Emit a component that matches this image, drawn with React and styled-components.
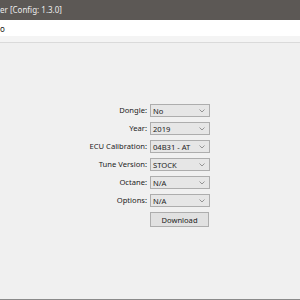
import React from "react";
import styled, { createGlobalStyle } from "styled-components";

const Global = createGlobalStyle`
  html, body { margin: 0; padding: 0; background: #f0f0f0; }
  #root { width: 300px; height: 300px; overflow: hidden; }
`;

const Window = styled.div`
  width: 300px;
  height: 300px;
  display: flex;
  flex-direction: column;
  background: #f0f0f0;
  font-family: "Noto Sans", "Open Sans", sans-serif;
  color: #1a1a1a;
  box-sizing: border-box;
  border-bottom: 1px solid #8a8a8a;
`;

const TitleBar = styled.div`
  height: 20px;
  flex: none;
  background: #5c5855;
  color: #ececec;
  font-size: 8px;
  line-height: 20px;
  white-space: nowrap;
`;

const MenuBar = styled.div`
  height: 15px;
  flex: none;
  background: #ffffff;
  font-size: 8px;
  line-height: 15px;
  padding-top: 1px;
`;

const Strip = styled.div`
  height: 6px;
  flex: none;
  background: #f4f4f4;
  border-bottom: 1px solid #dadada;
`;

const Body = styled.div`
  flex: 1;
  padding-top: 61px;
  padding-left: 57px;
`;

const Form = styled.div`
  display: grid;
  grid-template-columns: 90px 60px;
  grid-auto-rows: 13px;
  column-gap: 3px;
  row-gap: 5px;
`;

const Label = styled.div`
  justify-self: end;
  font-size: 7.6px;
  line-height: 13px;
  white-space: nowrap;
  color: #222;
`;

const Select = styled.div`
  box-sizing: border-box;
  width: 60px;
  height: 13px;
  background: #e6e6e6;
  border: 1px solid #adadad;
  display: flex;
  align-items: center;
  justify-content: space-between;
  padding: 0 4px 0 2px;
  font-size: 7.6px;
  color: #222;
`;

const Button = styled.div`
  grid-column: 2;
  box-sizing: border-box;
  width: 59px;
  height: 15px;
  background: #e1e1e1;
  border: 1px solid #adadad;
  display: flex;
  align-items: center;
  justify-content: center;
  font-size: 7.6px;
  color: #222;
`;

const Chevron = () => (
  <svg width="6" height="4" viewBox="0 0 6 4">
    <polyline points="0.5,0.5 3,3 5.5,0.5" fill="none" stroke="#8a8a8a" strokeWidth="0.9" />
  </svg>
);

const rows = [
  ["Dongle:", "No"],
  ["Year:", "2019"],
  ["ECU Calibration:", "04B31 - AT"],
  ["Tune Version:", "STOCK"],
  ["Octane:", "N/A"],
  ["Options:", "N/A"],
];

export default function App() {
  return (
    <>
      <Global />
      <Window>
        <TitleBar>er [Config: 1.3.0]</TitleBar>
        <MenuBar>o</MenuBar>
        <Strip />
        <Body>
          <Form>
            {rows.map(([l, v]) => (
              <React.Fragment key={l}>
                <Label>{l}</Label>
                <Select>
                  <span>{v}</span>
                  <Chevron />
                </Select>
              </React.Fragment>
            ))}
            <Button>Download</Button>
          </Form>
        </Body>
      </Window>
    </>
  );
}
